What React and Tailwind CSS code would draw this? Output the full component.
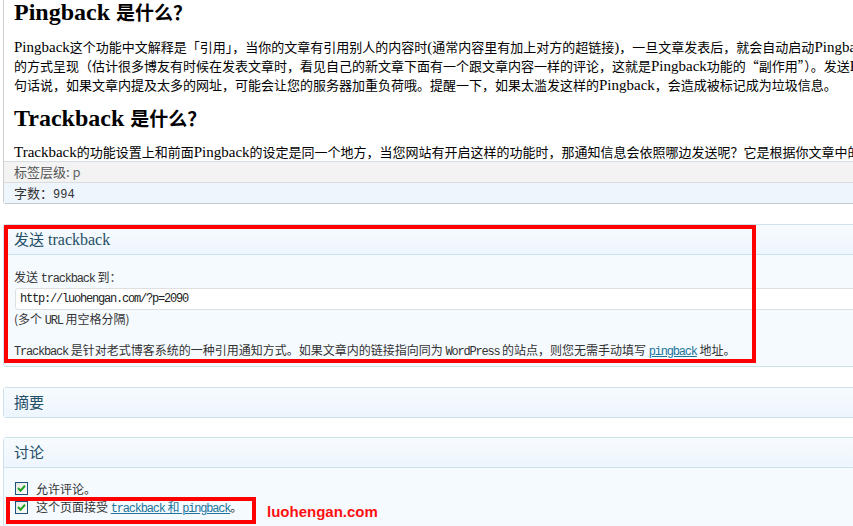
import React from 'react';

const serif = "font-['Liberation_Serif','Noto_Sans_CJK_SC',serif]";
const cjk = "font-['Noto_Sans_CJK_SC','Liberation_Sans',sans-serif]";
const cjk13 = "font-['Noto_Sans_CJK_SC','Liberation_Sans',sans-serif] text-[13px]";
const line = 'h-[19px] leading-[19px] whitespace-nowrap';

function Mono({ children }) {
  return <span className="font-['Liberation_Mono',monospace] tracking-[-1.2px]">{children}</span>;
}

function Check() {
  return (
    <svg width="13" height="13" viewBox="0 0 13 13" className="shrink-0">
      <defs>
        <linearGradient id="cb" x1="0" y1="0" x2="1" y2="1">
          <stop offset="0" stopColor="#e6e6e0" />
          <stop offset="1" stopColor="#ffffff" />
        </linearGradient>
      </defs>
      <rect x="0.5" y="0.5" width="12" height="12" fill="url(#cb)" stroke="#1c5180" />
      <path d="M3 6 L5.5 8.7 L10 3.8" stroke="#21a121" strokeWidth="2" fill="none" />
    </svg>
  );
}

function PostboxHeader({ children }) {
  return (
    <div className={`h-[29px] flex items-center pl-[10px] text-[16px] text-[#234e66] bg-gradient-to-b from-[#f7fbfe] to-[#edf5fd] ${serif}`}>
      {children}
    </div>
  );
}

export default function App() {
  return (
    <div className="relative w-[853px] h-[526px] overflow-hidden bg-white pl-[3px]">
      <div className="w-[900px]">
        {/* editor */}
        <div className="border-l border-[#cfcfcf] rounded-bl-[3px] border-b border-b-[#c3ccd3]">
          <div className={`h-[161px] overflow-hidden pl-[10px] text-black ${serif}`}>
            <h2 className="h-[24px] text-[24px] font-bold leading-[24px] whitespace-nowrap">
              Pingback <span className={`${cjk} text-[19px]`}>是什么？</span>
            </h2>
            <div className="mt-[13px] text-[15px]">
              <div className={line}>
                Pingback<span className={cjk13}>这个功能中文解释是「引用」，当你的文章有引用别人的内容时</span>(<span className={cjk13}>通常内容里有加上对方的超链接</span>)<span className={cjk13}>，一旦文章发表后，就会自动启动</span>Pingback<span className={cjk13}>功能</span>
              </div>
              <div className={line}>
                <span className={cjk13}>的方式呈现（估计很多博友有时候在发表文章时，看见自己的新文章下面有一个跟文章内容一样的评论，这就是</span>Pingback<span className={cjk13}>功能的“副作用”）。发送</span>Pingback
              </div>
              <div className={line}>
                <span className={cjk13}>句话说，如果文章内提及太多的网址，可能会让您的服务器加重负荷哦。提醒一下，如果太滥发这样的</span>Pingback<span className={cjk13}>，会造成被标记成为垃圾信息。</span>
              </div>
            </div>
            <h2 className="mt-[12px] h-[24px] text-[24px] font-bold leading-[24px] whitespace-nowrap">
              Trackback <span className={`${cjk} text-[19px]`}>是什么？</span>
            </h2>
            <div className="mt-[12px] text-[15px]">
              <div className={line}>
                Trackback<span className={cjk13}>的功能设置上和前面</span>Pingback<span className={cjk13}>的设定是同一个地方，当您网站有开启这样的功能时，那通知信息会依照哪边发送呢？它是根据你文章中的链接</span>
              </div>
            </div>
          </div>
          <div className={`h-[21px] border-t border-[#d6dde4] bg-[#f3f3f3] pl-[10px] text-[13px] leading-[20px] text-[#555] ${cjk}`}>
            标签层级: <span className="text-[#666]">p</span>
          </div>
          <div className={`h-[21px] border-t border-[#dcdcdc] bg-[#eef5fd] pl-[10px] text-[13px] leading-[20px] text-[#333] ${cjk}`}>
            字数：<span className="font-['Liberation_Mono',monospace] text-[12px]">994</span>
          </div>
        </div>

        {/* send trackback */}
        <div className="mt-[20px] border border-[#cde2ea] rounded-[3px] bg-[#f5faff]">
          <div className="border-b border-[#cde2ea]">
            <PostboxHeader>
              <span className={`${cjk} text-[15px]`}>发送</span>&nbsp;trackback
            </PostboxHeader>
          </div>
          <div className={`h-[111px] pl-[10px] pt-[14px] text-[12px] leading-[16px] text-[#333] ${cjk}`}>
            <div>
              发送 <Mono>trackback</Mono> 到：
            </div>
            <div className="mt-[1px] ml-[1px] h-[22px] border border-[#dfdfdf] rounded-[3px] bg-white pl-[4px] flex items-center text-[#222]">
              <span className="font-['Liberation_Mono',monospace] text-[12px] tracking-[-1.2px]">http://luohengan.com/?p=2090</span>
            </div>
            <div className="mt-[1px]">
              (多个 <Mono>URL</Mono> 用空格分隔)
            </div>
            <div className="mt-[13px] whitespace-nowrap">
              <Mono>Trackback</Mono> 是针对老式博客系统的一种引用通知方式。如果文章内的链接指向同为 <Mono>WordPress</Mono> 的站点，则您无需手动填写{' '}
              <span className="text-[#21759b] underline">
                <Mono>pingback</Mono>
              </span>{' '}
              地址。
            </div>
          </div>
        </div>

        {/* excerpt */}
        <div className="mt-[20px] border border-[#cde2ea] rounded-[3px]">
          <PostboxHeader>
            <span className={`${cjk} text-[15px]`}>摘要</span>
          </PostboxHeader>
        </div>

        {/* discussion */}
        <div className="mt-[19px] border border-[#cde2ea] rounded-[3px] bg-[#f5faff] h-[120px]">
          <div className="border-b border-[#cde2ea]">
            <PostboxHeader>
              <span className={`${cjk} text-[15px]`}>讨论</span>
            </PostboxHeader>
          </div>
          <div className={`pl-[11px] pt-[11px] text-[12px] text-[#333] ${cjk}`}>
            <label className="h-[19px] flex items-center gap-[8px]">
              <Check />
              允许评论。
            </label>
            <label className="h-[19px] flex items-center gap-[8px]">
              <Check />
              <span>
                这个页面接受{' '}
                <span className="text-[#21759b] underline">
                  <Mono>trackback</Mono> 和 <Mono>pingback</Mono>
                </span>
                。
              </span>
            </label>
          </div>
        </div>
      </div>

      {/* annotations */}
      <div className="absolute left-[4px] top-[225px] w-[752px] h-[138px] border-4 border-[#ff0000] pointer-events-none" />
      <div className="absolute left-[6px] top-[497px] w-[250px] h-[27px] border-4 border-[#ff0000] pointer-events-none" />
      <div className="absolute left-[267px] top-[502px] text-[15px] font-bold text-[#ff1010] font-['Liberation_Sans',Arial,sans-serif] leading-[20px]">
        luohengan.com
      </div>
    </div>
  );
}
